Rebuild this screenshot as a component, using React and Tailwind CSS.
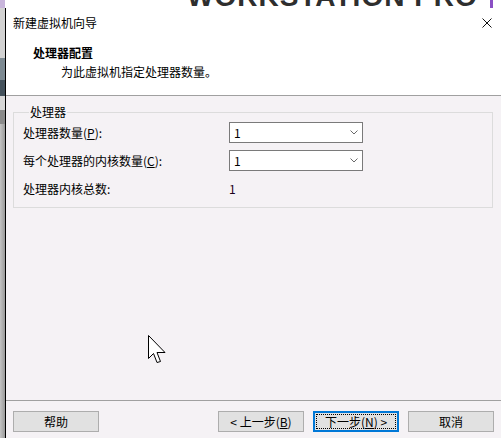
import React from "react";

const cjk = "font-['Noto_Sans_CJK_SC','Noto_Sans',sans-serif]";

function Select({ value }) {
  return (
    <div className="w-[134px] h-[21px] border border-[#7a7a7a] bg-white flex items-center pl-[4px] pr-[4px]">
      <span className="flex-1 leading-[14px]">{value}</span>
      <svg width="8" height="5" viewBox="0 0 8 5">
        <path d="M0.5 0.5 L4 4 L7.5 0.5" fill="none" stroke="#6a6a6a" strokeWidth="1" />
      </svg>
    </div>
  );
}

function Button({ children, primary }) {
  if (primary) {
    return (
      <button className="w-[86px] h-[21px] border-2 border-[#0078d7] bg-[#e1e1e1] p-[1px] flex">
        <span className="flex-1 border border-dotted border-black flex items-center justify-center leading-[14px]">
          {children}
        </span>
      </button>
    );
  }
  return (
    <button className="w-[86px] h-[21px] border border-[#adadad] bg-[#e1e1e1] flex items-center justify-center leading-[14px]">
      {children}
    </button>
  );
}

export default function App() {
  return (
    <div className={`w-[501px] h-[438px] flex overflow-hidden relative text-[12px] text-black ${cjk}`}>
      {/* background app peeking at the left */}
      <div className="w-[5px] flex flex-col">
        <div className="h-[8px] bg-[#c9b6dc]" />
        <div className="h-[50px] bg-[#d2d2d2]" />
        <div className="h-[22px] bg-[#7d8a92]" />
        <div className="h-[16px] bg-[#44525c]" />
        <div className="h-[14px] bg-[#d6d6d6]" />
        <div className="h-[14px] bg-[#8a8a8a]" />
        <div className="flex-1 bg-gradient-to-r from-[#c4c4c4] to-[#9a9a9a]" />
      </div>

      <div className="flex-1 flex flex-col">
        {/* background app header band */}
        <div className="h-[8px] bg-white overflow-hidden flex pl-[182px]">
          <span className="font-['Liberation_Sans',sans-serif] font-bold text-[28px] leading-none mt-[-17px] tracking-[1px] text-[#2e2e2e] whitespace-nowrap">
            WORKSTATION PRO
          </span>
          <div className="ml-auto mr-[8px] w-[3px] bg-[#8a4fc4]" />
        </div>

        {/* dialog */}
        <div className="flex-1 flex flex-col border-l border-black bg-[#f5f2f5]">
          <div className="h-[88px] bg-white border-b border-[#a0a0a0] pt-[8px]">
            <div className="flex items-center justify-between pl-[7px] pr-[9px] h-[14px]">
              <span className="leading-[14px]">新建虚拟机向导</span>
              <svg width="10" height="10" viewBox="0 0 10 10">
                <path d="M0.5 0.5 L9.5 9.5 M9.5 0.5 L0.5 9.5" stroke="#111" strokeWidth="1" />
              </svg>
            </div>
            <div className="mt-[16px] pl-[27px] font-bold leading-[14px]">处理器配置</div>
            <div className="mt-[5px] pl-[55px] leading-[14px]">为此虚拟机指定处理器数量。</div>
          </div>

          <div className="flex-1 pt-[9px] pl-[7px] pr-[8px]">
            <fieldset className="border border-[#dcdcdc] pl-[9px] pb-[8px]">
              <legend className="ml-[6px] px-[1px] leading-[14px]">处理器</legend>
              <div className="flex flex-col gap-[7px] mt-[3px]">
                <div className="flex items-center h-[21px]">
                  <span className="w-[206px] leading-[14px]">
                    处理器数量(<span className="underline">P</span>):
                  </span>
                  <Select value="1" />
                </div>
                <div className="flex items-center h-[21px]">
                  <span className="w-[206px] leading-[14px]">
                    每个处理器的内核数量(<span className="underline">C</span>):
                  </span>
                  <Select value="1" />
                </div>
                <div className="flex items-center h-[21px]">
                  <span className="w-[206px] leading-[14px]">处理器内核总数:</span>
                  <span className="leading-[14px] text-[#1a001a]">1</span>
                </div>
              </div>
            </fieldset>
          </div>

          <div className="h-[38px] border-t border-[#a0a0a0] pt-[10px] pl-[7px] pr-[7px] flex items-start">
            <Button>帮助</Button>
            <div className="flex-1" />
            <div className="flex gap-[9px]">
              <Button>
                &lt; 上一步(<span className="underline">B</span>)
              </Button>
              <Button primary>
                下一步(<span className="underline">N</span>) &gt;
              </Button>
              <Button>取消</Button>
            </div>
          </div>
        </div>
      </div>

      {/* mouse pointer */}
      <svg className="absolute left-[148px] top-[335px]" width="19" height="30" viewBox="0 0 19 30">
        <path
          d="M0.5 0.5 L0.5 23.5 L5.5 18.5 L9 27.5 L12.5 26.5 L9 17.5 L17 17.5 Z"
          fill="white"
          stroke="black"
          strokeWidth="1"
          strokeLinejoin="miter"
        />
      </svg>
    </div>
  );
}
